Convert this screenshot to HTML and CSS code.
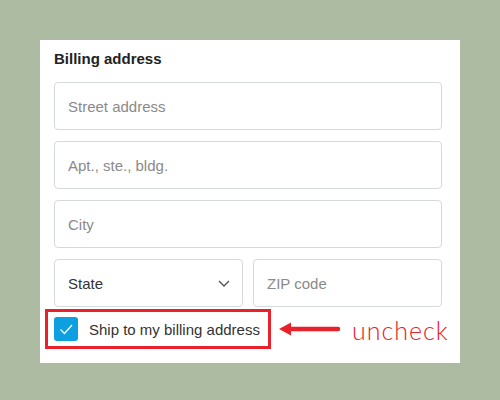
FILE: index.html
```html
<!DOCTYPE html>
<html>
<head>
<meta charset="utf-8">
<link rel="stylesheet" href="styles.css">
</head>
<body>
<div class="panel">
  <h2 class="title">Billing address</h2>
  <div class="field"><span class="ph">Street address</span></div>
  <div class="field"><span class="ph">Apt., ste., bldg.</span></div>
  <div class="field"><span class="ph">City</span></div>
  <div class="row">
    <div class="field select"><span class="val">State</span>
      <svg class="chev" width="12" height="7" viewBox="0 0 12 7"><path d="M1 1 L6 6 L11 1" fill="none" stroke="#555" stroke-width="1.4"/></svg>
    </div>
    <div class="field"><span class="ph">ZIP code</span></div>
  </div>
  <div class="note-row">
    <div class="hl">
      <span class="box"><svg width="24" height="24" viewBox="0 0 24 24"><path d="M6.5 12.5 L10.5 16.5 L18 8" fill="none" stroke="#fff" stroke-width="1.3"/></svg></span>
      <span class="label">Ship to my billing address</span>
    </div>
    <svg class="arrow" width="62" height="16" viewBox="0 0 62 16"><path d="M10 8 H59" stroke="#e8212b" stroke-width="4.5" stroke-linecap="round"/><path d="M0 8 L12 1.5 L12 14.5 Z" fill="#e8212b"/></svg>
    <span class="uncheck">uncheck</span>
  </div>
</div>
</body>
</html>
```
FILE: styles.css
```css
html, body { margin: 0; padding: 0; }
body {
  background: #adbba3;
  width: 500px;
  height: 400px;
  padding: 40px;
  box-sizing: border-box;
  font-family: "Liberation Sans", Arial, sans-serif;
}
.panel {
  background: #fff;
  width: 420px;
  height: 323px;
  box-sizing: border-box;
  padding: 10px 18px 0 14px;
  display: flex;
  flex-direction: column;
  gap: 11px;
}
.title {
  margin: 0 0 3px 0;
  font-size: 15px;
  line-height: 18px;
  font-weight: bold;
  color: #222;
}
.field {
  height: 48px;
  box-sizing: border-box;
  border: 1px solid #d6d9dd;
  border-radius: 4px;
  display: flex;
  align-items: center;
  padding-left: 13px;
  font-size: 15px;
}
.ph { color: #8a8a8a; }
.val { color: #333; }
.row {
  display: grid;
  grid-template-columns: 189px 189px;
  gap: 10px;
}
.select { justify-content: space-between; padding-right: 12px; }
.chev { display: block; }
.note-row {
  margin-top: -9px;
  margin-left: -9px;
  margin-right: -14px;
  display: flex;
  align-items: center;
}
.hl {
  flex: none;
  width: 226px;
  height: 40px;
  box-sizing: border-box;
  border: 3px solid #e8212b;
  display: flex;
  align-items: center;
  padding-left: 6px;
  gap: 11px;
}
.box {
  flex: none;
  width: 24px;
  height: 24px;
  border-radius: 3px;
  background: #0d9fdf;
  display: block;
}
.box svg { display: block; }
.label { font-size: 15px; color: #333; white-space: nowrap; }
.arrow { flex: none; margin-left: 8px; display: block; }
.uncheck {
  flex: none;
  margin-left: 11px;
  font-family: Lato, sans-serif;
  font-weight: 300;
  font-size: 25px;
  letter-spacing: 1px;
  color: #e8212b;
  margin-top: 2px;
}
```
